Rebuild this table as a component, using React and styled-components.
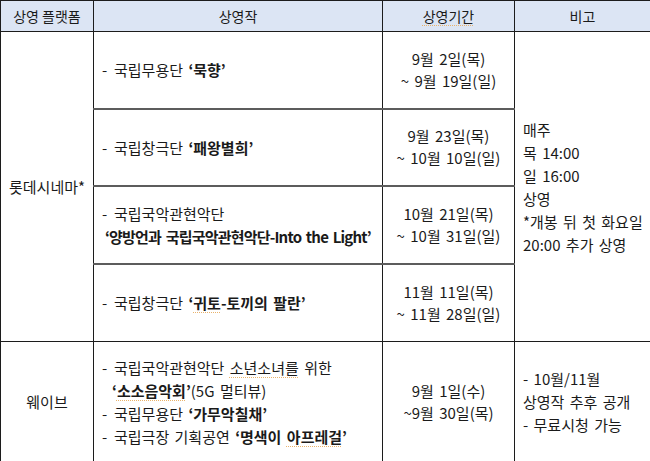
import React from "react"
import styled, { createGlobalStyle } from "styled-components"

const GlobalStyle = createGlobalStyle`
  html, body {
    margin: 0;
    padding: 0;
    background: #fff;
  }
  body {
    font-family: "Noto Sans CJK KR", "Noto Sans", sans-serif;
    color: #1a1a1a;
  }
`

const Table = styled.table`
  width: 650px;
  height: 461px;
  border-collapse: collapse;
  table-layout: fixed;
  font-size: 15px;
  line-height: 23px;
`

const Row = styled.tr`
  height: ${(p) => p.$h}px;
`

const HeadCell = styled.th`
  background: #dce5f4;
  font-weight: 400;
  font-size: 14px;
  border: 1px solid #1c1c1c;
  padding: 0;
  text-align: center;
  vertical-align: middle;
`

const Cell = styled.td`
  border: 1px solid #1c1c1c;
  border-top: ${(p) => (p.$split ? "2px solid #5c5c5c" : "1px solid #1c1c1c")};
  padding: 0 ${(p) => p.$pad || 0}px;
  text-align: ${(p) => p.$align || "left"};
  vertical-align: middle;
  line-height: ${(p) => p.$lh || 23}px;
  word-spacing: 2px;
`

const Line = styled.div`
  white-space: pre;
  padding-left: ${(p) => p.$indent || 0}px;
  letter-spacing: ${(p) => p.$tight || 0}px;
`

const Title = styled.b`
  font-weight: 700;
`

const Dash = styled.span`
  display: inline-block;
  width: 12px;
`

const Squiggle = styled.span`
  text-decoration: underline dotted #e9b36c;
  text-decoration-thickness: 1px;
  text-underline-offset: 3px;
`

const Dates = ({ from, to, split }) => (
  <Cell $align="center" $lh={22} $split={split}>
    <Line>{from}</Line>
    <Line>{to}</Line>
  </Cell>
)

const Work = ({ children }) => (
  <Line>
    <Dash>-</Dash>
    {children}
  </Line>
)

const App = () => {
  return (
    <>
      <GlobalStyle />
      <Table>
        <colgroup>
          <col style={{ width: 93 }} />
          <col style={{ width: 289 }} />
          <col style={{ width: 132 }} />
          <col style={{ width: 136 }} />
        </colgroup>
        <thead>
          <Row $h={31}>
            <HeadCell>상영 플랫폼</HeadCell>
            <HeadCell>상영작</HeadCell>
            <HeadCell>
              <Squiggle>상영기간</Squiggle>
            </HeadCell>
            <HeadCell>비고</HeadCell>
          </Row>
        </thead>
        <tbody>
          <Row $h={77}>
            <Cell rowSpan={4} $align="center">
              롯데시네마*
            </Cell>
            <Cell $pad={8}>
              <Work>
                국립무용단 <Title>‘묵향’</Title>
              </Work>
            </Cell>
            <Dates from="9월 2일(목)" to="~ 9월 19일(일)" />
            <Cell rowSpan={4} $pad={8}>
              <Line>매주</Line>
              <Line>목 14:00</Line>
              <Line>일 16:00</Line>
              <Line>상영</Line>
              <Line>*개봉 뒤 첫 화요일</Line>
              <Line>20:00 추가 상영</Line>
            </Cell>
          </Row>
          <Row $h={77}>
            <Cell $pad={8} $split>
              <Work>
                국립창극단 <Title>‘패왕별희’</Title>
              </Work>
            </Cell>
            <Dates from="9월 23일(목)" to="~ 10월 10일(일)" split />
          </Row>
          <Row $h={78}>
            <Cell $pad={8} $split>
              <Work>국립국악관현악단</Work>
              <Line $indent={3} $tight={-0.8}>
                <Title>‘양방언과 국립국악관현악단-Into the Light’</Title>
              </Line>
            </Cell>
            <Dates from="10월 21일(목)" to="~ 10월 31일(일)" split />
          </Row>
          <Row $h={78}>
            <Cell $pad={8} $split>
              <Work>
                국립창극단{" "}
                <Title>
                  ‘<Squiggle>귀토</Squiggle>-토끼의 팔란’
                </Title>
              </Work>
            </Cell>
            <Dates from="11월 11일(목)" to="~ 11월 28일(일)" split />
          </Row>
          <Row $h={120}>
            <Cell $align="center">웨이브</Cell>
            <Cell $pad={8}>
              <Work>
                국립국악관현악단 <Squiggle>소년소녀를</Squiggle> 위한
              </Work>
              <Line $indent={10}>
                <Title>
                  ‘<Squiggle>소소음악회</Squiggle>’
                </Title>
                (5G 멀티뷰)
              </Line>
              <Work>
                국립무용단 <Title>‘가무악칠채’</Title>
              </Work>
              <Work>
                국립극장 기획공연{" "}
                <Title>
                  ‘명색이 <Squiggle>아프레걸</Squiggle>’
                </Title>
              </Work>
            </Cell>
            <Dates from="9월 1일(수)" to="~9월 30일(목)" />
            <Cell $pad={8}>
              <Line>- 10월/11월</Line>
              <Line>상영작 추후 공개</Line>
              <Line>- 무료시청 가능</Line>
            </Cell>
          </Row>
        </tbody>
      </Table>
    </>
  )
}

export default App
